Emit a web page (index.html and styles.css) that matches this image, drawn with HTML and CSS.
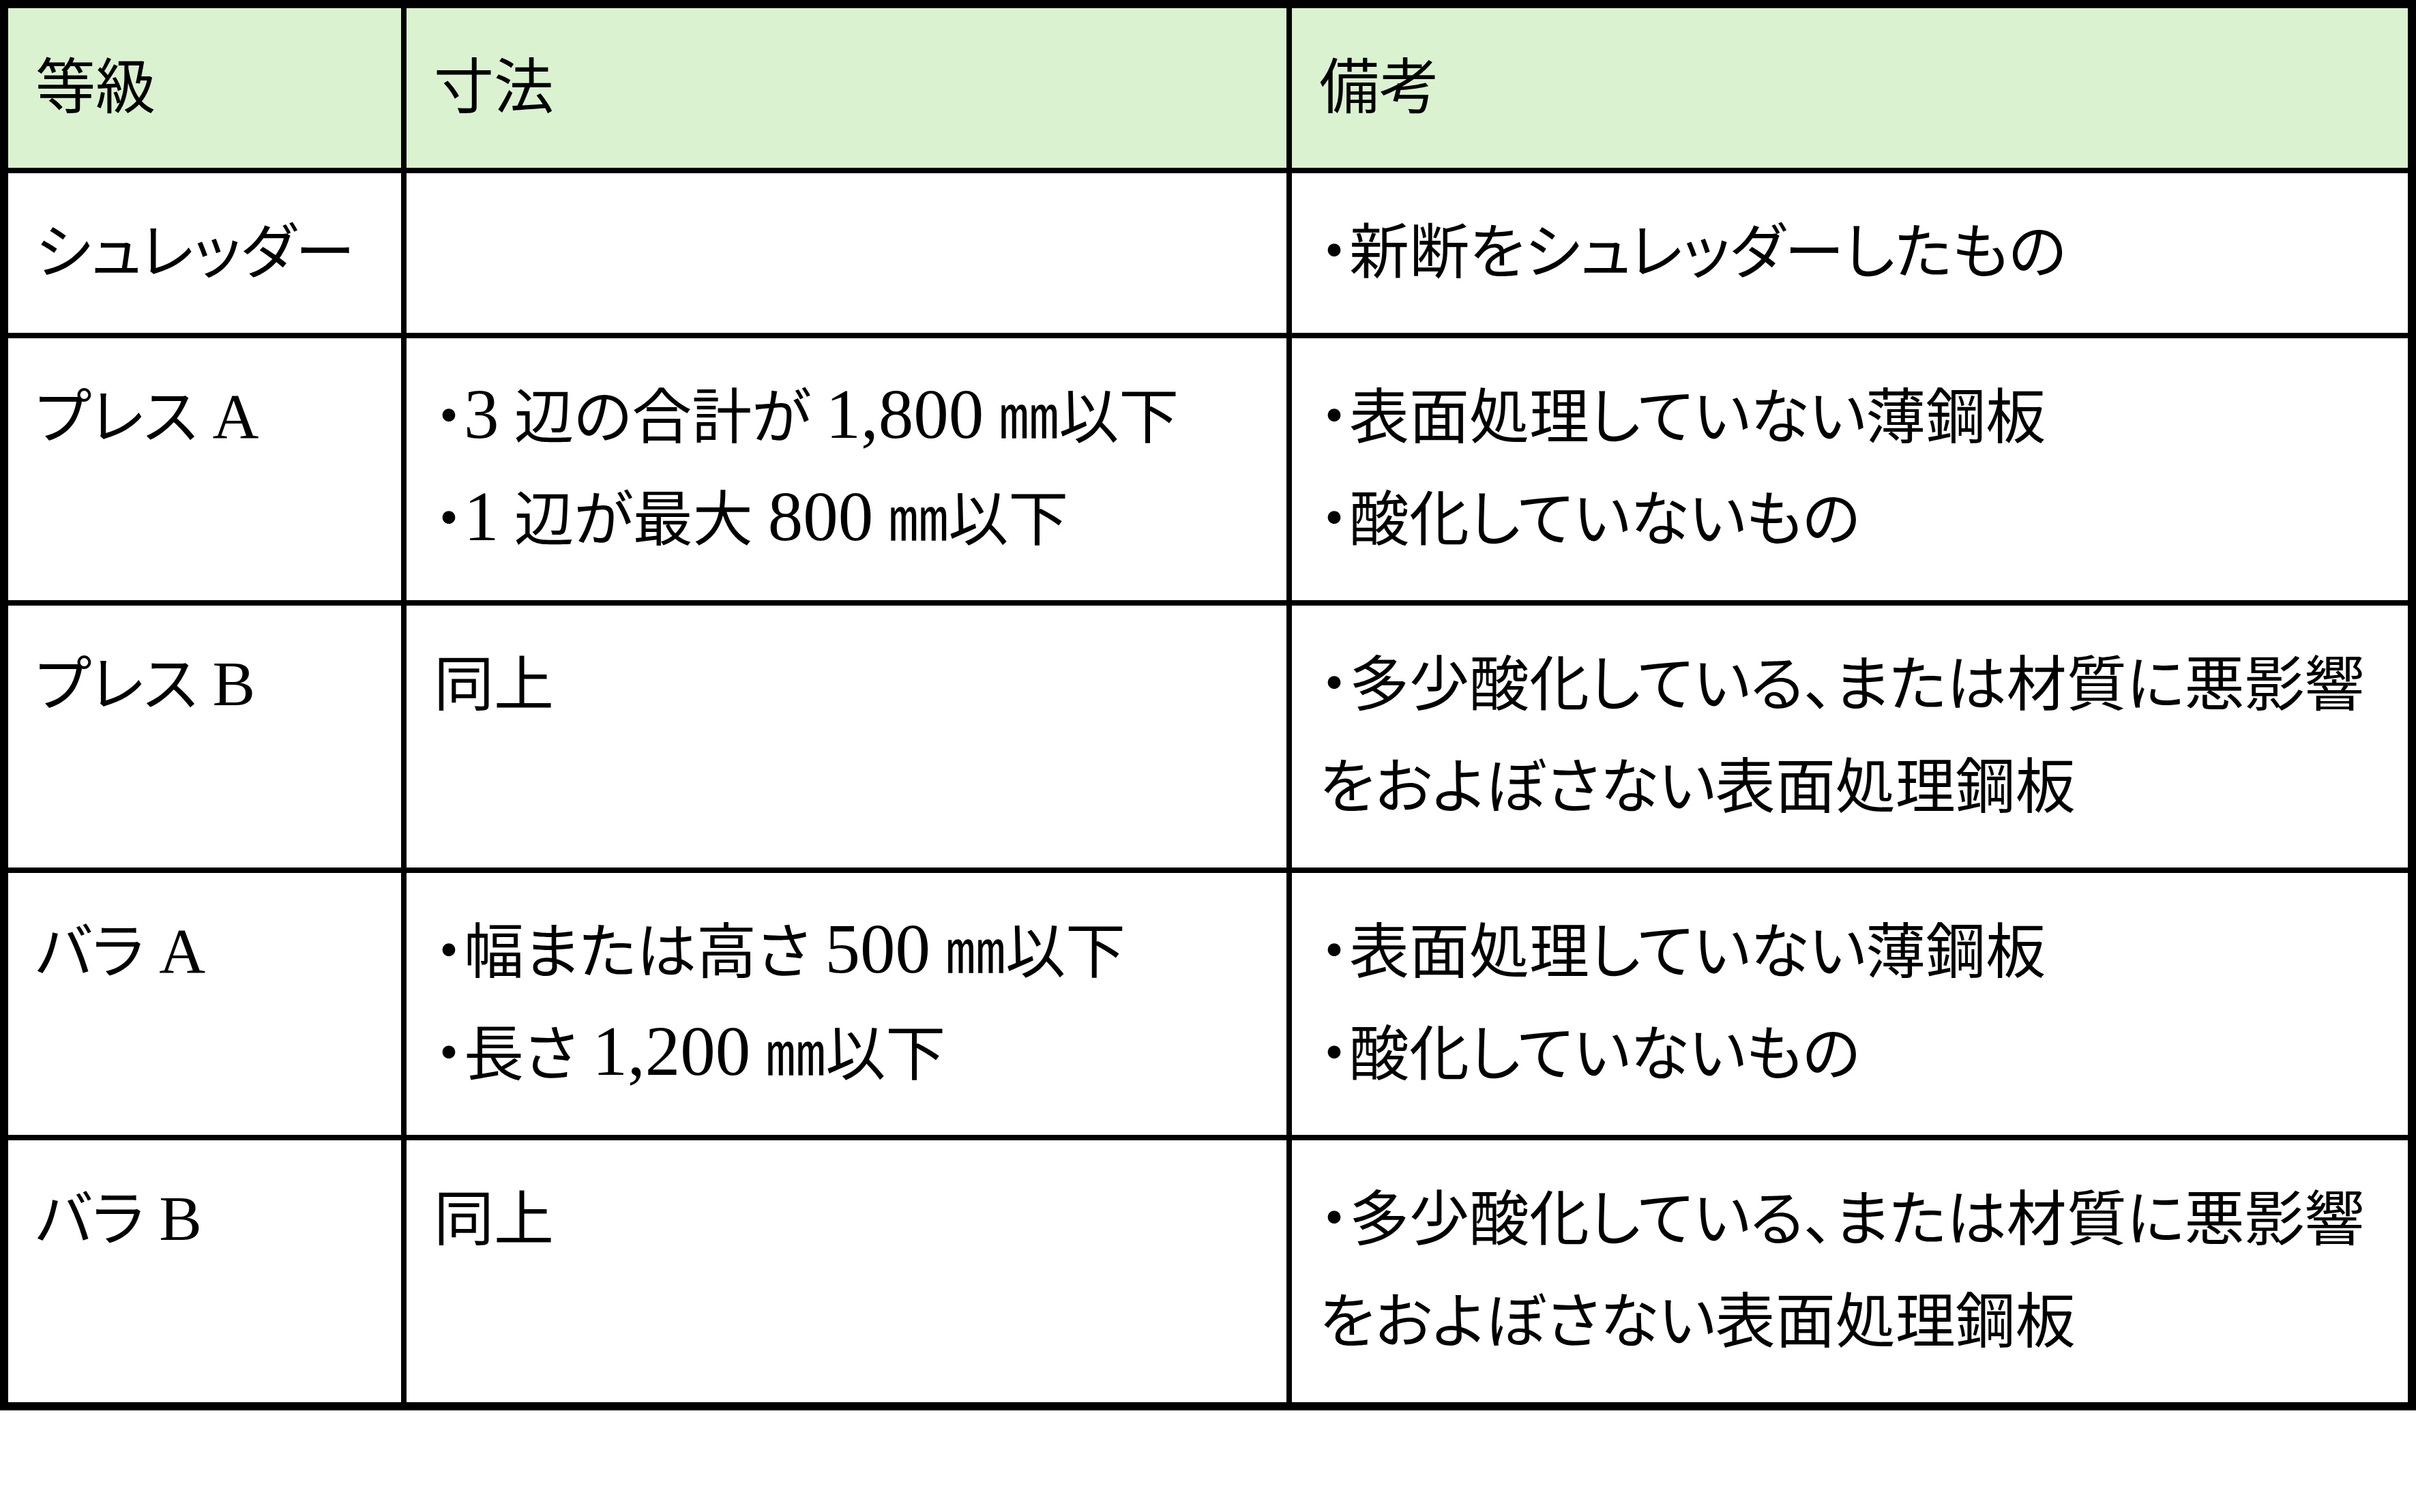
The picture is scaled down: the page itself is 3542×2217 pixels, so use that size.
FILE: index.html
```html
<!DOCTYPE html>
<html lang="ja">
<head>
<meta charset="utf-8">
<title>等級表</title>
<link rel="stylesheet" href="styles.css">
</head>
<body>
<table class="grade-table">
  <colgroup>
    <col class="col-grade">
    <col class="col-size">
    <col class="col-note">
  </colgroup>
  <thead>
    <tr class="head-row">
      <th>等級</th>
      <th>寸法</th>
      <th class="last-col">備考</th>
    </tr>
  </thead>
  <tbody>
    <tr class="row-single">
      <td>シュレッダー</td>
      <td></td>
      <td class="last-col">・新断をシュレッダーしたもの</td>
    </tr>
    <tr>
      <td>プレス <span class="latin">A</span></td>
      <td>・<span class="num">3</span> 辺の合計が <span class="num">1,800</span> ㎜以下<br>・<span class="num">1</span> 辺が最大 <span class="num">800</span> ㎜以下</td>
      <td class="last-col">・表面処理していない薄鋼板<br>・酸化していないもの</td>
    </tr>
    <tr>
      <td>プレス <span class="latin">B</span></td>
      <td>同上</td>
      <td class="last-col">・多少酸化している、または材質に悪影響<br>をおよぼさない表面処理鋼板</td>
    </tr>
    <tr>
      <td>バラ <span class="latin">A</span></td>
      <td>・幅または高さ <span class="num">500</span> ㎜以下<br>・長さ <span class="num">1,200</span> ㎜以下</td>
      <td class="last-col">・表面処理していない薄鋼板<br>・酸化していないもの</td>
    </tr>
    <tr class="last-row">
      <td>バラ <span class="latin">B</span></td>
      <td>同上</td>
      <td class="last-col">・多少酸化している、または材質に悪影響<br>をおよぼさない表面処理鋼板</td>
    </tr>
  </tbody>
</table>
</body>
</html>
```
FILE: styles.css
```css
html, body {
  margin: 0;
  padding: 0;
  background: #ffffff;
}

.grade-table {
  border-collapse: separate;
  border-spacing: 0;
  border: 12px solid #000000;
  table-layout: fixed;
  width: 3542px;
  font-family: "Liberation Serif", "Noto Sans CJK JP", sans-serif;
  font-size: 88px;
  font-weight: 400;
  color: #000000;
  font-feature-settings: "palt" 1;
}

.col-grade { width: 584px; }
.col-size { width: 1298px; }
.col-note { width: 1636px; }

.grade-table th,
.grade-table td {
  border-right: 8px solid #000000;
  border-bottom: 8px solid #000000;
  padding: 42px 36px 42px 40px;
  line-height: 150px;
  text-align: left;
  vertical-align: top;
  white-space: nowrap;
  font-weight: 400;
}

.grade-table .last-col {
  border-right: none;
}

.grade-table .last-row td {
  border-bottom: none;
}

.head-row th {
  background: #daf2d0;
}

.row-single td {
  height: 150px;
}

.num {
  font-size: 103px;
  line-height: 1;
}

.latin {
  font-size: 94px;
  line-height: 1;
}
```
